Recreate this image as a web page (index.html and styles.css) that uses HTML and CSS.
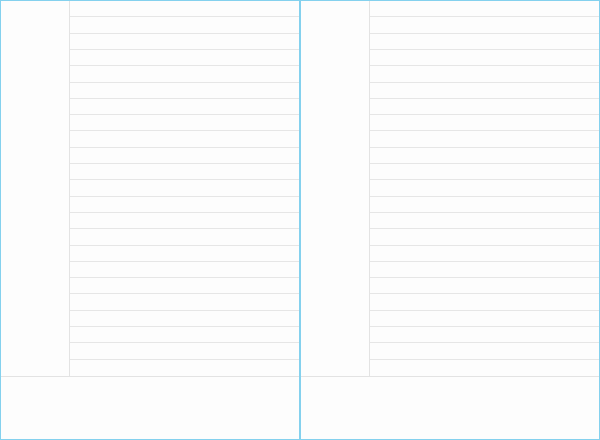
FILE: index.html
```html
<!DOCTYPE html>
<html lang="en">
<head>
  <meta charset="UTF-8" />
  <title>Schedule</title>
  <link rel="stylesheet" href="styles.css">
</head>
<body>
  <div class="board">
    <div class="panel">
      <div class="grid">
        <div class="labels"></div>
        <div class="rows">
          <div class="row"></div><div class="row"></div><div class="row"></div><div class="row"></div>
          <div class="row"></div><div class="row"></div><div class="row"></div><div class="row"></div>
          <div class="row"></div><div class="row"></div><div class="row"></div><div class="row"></div>
          <div class="row"></div><div class="row"></div><div class="row"></div><div class="row"></div>
          <div class="row"></div><div class="row"></div><div class="row"></div><div class="row"></div>
          <div class="row"></div><div class="row"></div><div class="row"></div>
        </div>
      </div>
      <div class="footer"></div>
    </div>
    <div class="panel">
      <div class="grid">
        <div class="labels"></div>
        <div class="rows">
          <div class="row"></div><div class="row"></div><div class="row"></div><div class="row"></div>
          <div class="row"></div><div class="row"></div><div class="row"></div><div class="row"></div>
          <div class="row"></div><div class="row"></div><div class="row"></div><div class="row"></div>
          <div class="row"></div><div class="row"></div><div class="row"></div><div class="row"></div>
          <div class="row"></div><div class="row"></div><div class="row"></div><div class="row"></div>
          <div class="row"></div><div class="row"></div><div class="row"></div>
        </div>
      </div>
      <div class="footer"></div>
    </div>
  </div>
</body>
</html>
```

FILE: styles.css
```css
* {
  margin: 0;
  padding: 0;
  box-sizing: border-box;
}

body {
  font-family: 'Liberation Sans', Arial, sans-serif;
  background: #fdfdfd;
}

.board {
  display: flex;
  width: 600px;
  height: 440px;
}

.panel {
  width: 300px;
  height: 440px;
  border: 1px solid #84d1ee;
  background: #fdfdfd;
  display: flex;
  flex-direction: column;
}

.grid {
  display: flex;
  height: 376px;
  border-bottom: 1px solid #e3e3e3;
}

.labels {
  width: 69px;
  border-right: 1px solid #e3e3e3;
}

.rows {
  flex: 1;
  display: grid;
  grid-template-rows: repeat(23, 1fr);
}

.row {
  border-bottom: 1px solid #e6e6e6;
}

.row:last-child {
  border-bottom: none;
}

.footer {
  flex: 1;
}
```
